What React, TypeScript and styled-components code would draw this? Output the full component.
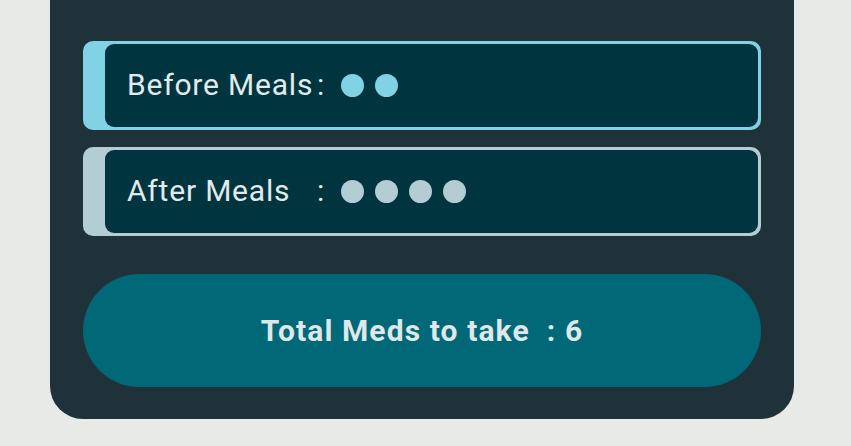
import React from 'react';
import styled, { createGlobalStyle } from 'styled-components';

const GlobalStyle = createGlobalStyle`
  html, body {
    margin: 0;
    padding: 0;
    background: #e8eae7;
    font-family: 'Roboto', 'Noto Sans', sans-serif;
  }
`;

const meals = [
  { label: 'Before Meals', count: 2, accent: '#82d2e6' },
  { label: 'After Meals', count: 4, accent: '#b4ccd3' },
];

function App() {
  const total = meals.reduce((sum, m) => sum + m.count, 0);
  return (
    <>
      <GlobalStyle />
      <Page>
        <Card>
          {meals.map(m => (
            <Row key={m.label} $accent={m.accent}>
              <Inner>
                <Label>{m.label}</Label>
                <Colon>:</Colon>
                <Dots>
                  {Array.from({ length: m.count }).map((_, i) => (
                    <Dot key={i} $color={m.accent} />
                  ))}
                </Dots>
              </Inner>
            </Row>
          ))}
          <TotalButton>Total Meds to take&nbsp; : {total}</TotalButton>
        </Card>
      </Page>
    </>
  );
}

export default App;

const Page = styled.div`
  width: 851px;
  height: 446px;
  padding-left: 50px;
  box-sizing: border-box;
`;

const Card = styled.div`
  width: 744px;
  box-sizing: border-box;
  background: #203239;
  border-radius: 0 0 33px 33px;
  padding: 41px 33px 32px;
  display: flex;
  flex-direction: column;
  gap: 17px;
`;

const Row = styled.div<{ $accent: string }>`
  height: 89px;
  box-sizing: border-box;
  background: ${p => p.$accent};
  border-radius: 10px;
  padding: 3px 3px 3px 22px;
  display: flex;
`;

const Inner = styled.div`
  flex: 1;
  background: #00353f;
  border-radius: 9px;
  display: flex;
  align-items: center;
  padding-left: 22px;
  color: #e3eaeb;
  font-size: 30px;
  letter-spacing: 0.8px;
`;

const Label = styled.span`
  width: 190px;
  margin-top: -2px;
`;

const Colon = styled.span`
  width: 24px;
  margin-top: -2px;
`;

const Dots = styled.div`
  display: flex;
  gap: 11px;
`;

const Dot = styled.span<{ $color: string }>`
  width: 23px;
  height: 23px;
  border-radius: 50%;
  background: ${p => p.$color};
`;

const TotalButton = styled.div`
  margin-top: 21px;
  height: 113px;
  border-radius: 57px;
  background: #016878;
  color: #dfe7e8;
  font-size: 30px;
  font-weight: 700;
  letter-spacing: 1.1px;
  display: flex;
  align-items: center;
  justify-content: center;
`;
